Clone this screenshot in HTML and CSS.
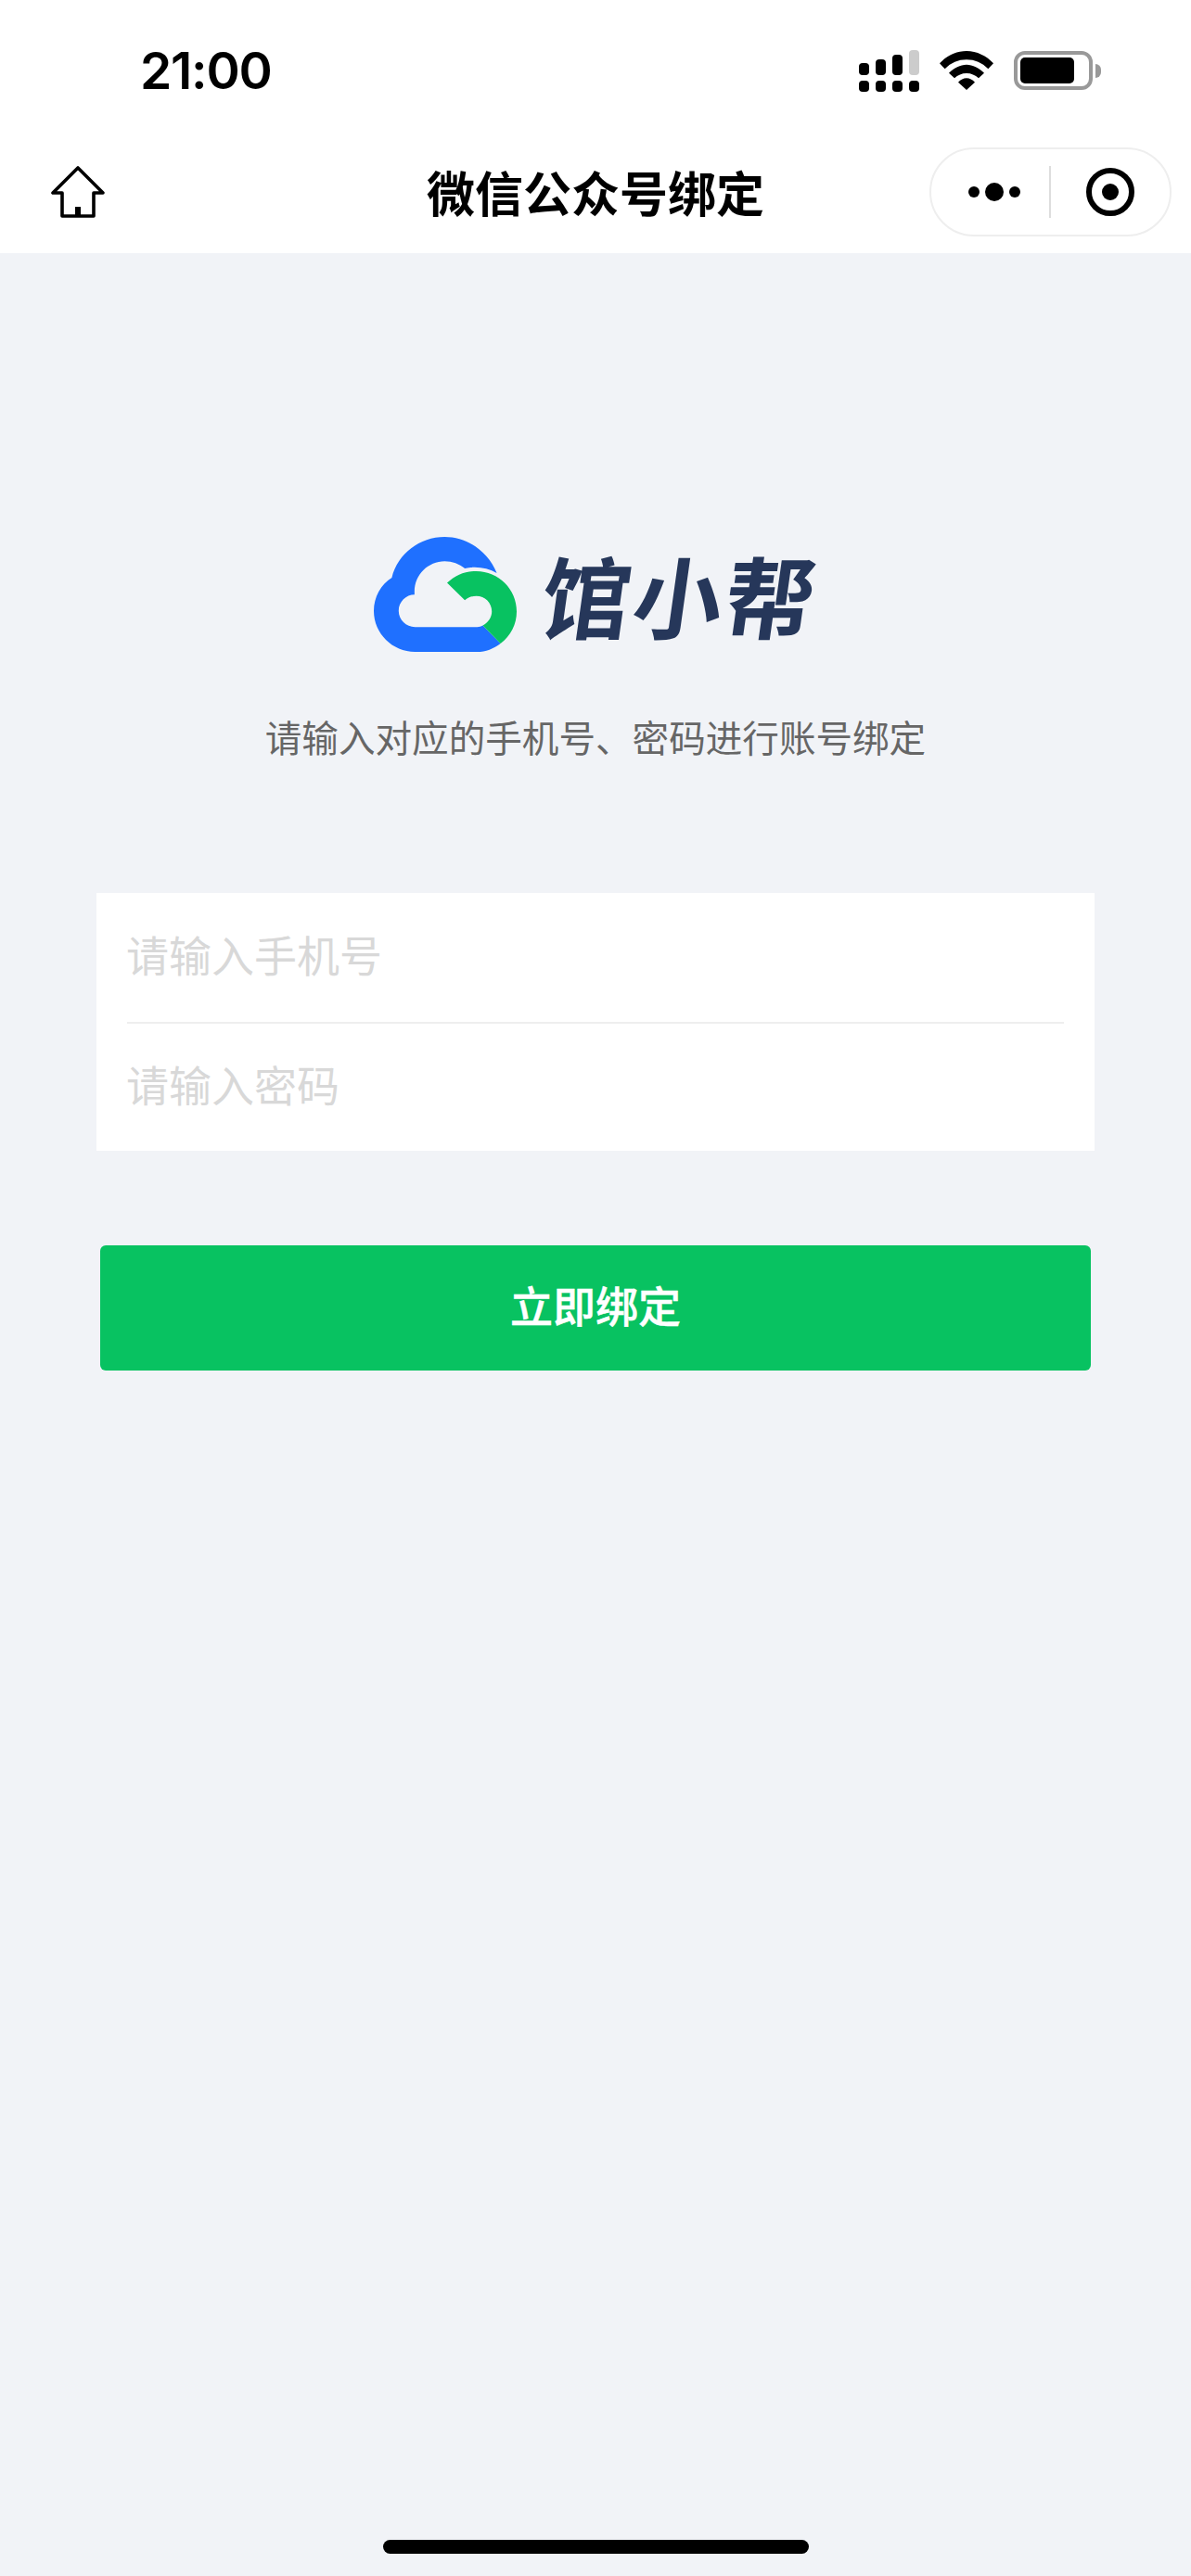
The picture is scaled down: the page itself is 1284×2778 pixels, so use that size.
FILE: index.html
```html
<!DOCTYPE html>
<html lang="zh-CN">
<head>
    <meta charset="UTF-8">
    <meta name="viewport" content="width=device-width, initial-scale=1.0">
    <title>微信公众号绑定</title>
    <link rel="stylesheet" href="styles.css">
</head>
<body>
    <div class="page">
        <div class="status-bar">
            <span class="time">21:00</span>
            <div class="status-icons">
                <svg class="icon-signal" width="65" height="45" viewBox="0 0 65 45">
                    <rect x="0" y="14" width="11" height="13" rx="4"/>
                    <rect x="18" y="10" width="11" height="17" rx="4"/>
                    <rect x="36" y="5" width="11" height="22" rx="4"/>
                    <rect x="54" y="0" width="11" height="27" rx="4" fill="#ccc"/>
                    <rect x="0" y="33" width="11" height="12" rx="4"/>
                    <rect x="18" y="33" width="11" height="12" rx="4"/>
                    <rect x="36" y="33" width="11" height="12" rx="4"/>
                    <rect x="54" y="33" width="11" height="12" rx="4"/>
                </svg>
                <svg class="icon-wifi" width="58" height="42" viewBox="398 72 174 126">
                    <path d="M398 112C420 88 452 72 485 72C518 72 550 88 572 112L555 130C535 110 512 100 485 100C458 100 435 110 415 130Z"/>
                    <path d="M428 143C445 127 465 116 485 116C505 116 525 127 542 143L524 160C513 150 500 144 485 144C470 144 457 150 446 160Z"/>
                    <path d="M458 173C466 165 475 160 485 160C495 160 504 165 512 173L485 198Z"/>
                </svg>
                <div class="battery">
                    <div class="battery-body"><div class="battery-level"></div></div>
                    <div class="battery-cap"></div>
                </div>
            </div>
        </div>

        <div class="nav-bar">
            <div class="nav-left">
                <svg class="icon-home" width="58" height="56" viewBox="0 0 58 56">
                    <path d="M29 2L2 29H12V54H46V29H56Z" fill="none" stroke="#000" stroke-width="3.6" stroke-linejoin="round"/>
                    <rect x="26" y="44" width="6" height="10"/>
                </svg>
            </div>
            <div class="nav-title">微信公众号绑定</div>
            <div class="nav-right">
                <div class="capsule">
                    <div class="capsule-more">
                        <span class="dot"></span><span class="dot dot-big"></span><span class="dot"></span>
                    </div>
                    <div class="capsule-line"></div>
                    <div class="capsule-close"><span class="close-ring"><span class="close-core"></span></span></div>
                </div>
            </div>
        </div>

        <div class="content">
            <div class="logo">
                <svg class="logo-cloud" width="154" height="124" viewBox="72 87 460 370">
                    <path fill="#1f70ff" d="M468 203C440 135 375 87 300 87C220 87 150 140 130 218C95 240 72 280 72 325C72 398 132 457 205 457H405C432 457 458 447 480 430L423 372C417 376 412 377 405 377H205C176 377 152 354 152 325C152 296 176 273 203 273V262C203 208 248 165 300 165C325 165 347 174 365 188C398 180 438 185 468 203Z"/>
                    <path fill="#08c261" d="M308 235C335 210 365 197 402 197C474 197 532 255 532 327C532 368 513 405 480 430L423 372C440 362 452 346 452 327C452 299 430 277 402 277C388 277 375 282 365 291Z"/>
                </svg>
                <span class="logo-text">馆小帮</span>
            </div>
            <p class="tip">请输入对应的手机号、密码进行账号绑定</p>

            <form class="bind-form">
                <div class="field"><input type="text" placeholder="请输入手机号"></div>
                <div class="field"><input type="password" placeholder="请输入密码"></div>
            </form>

            <button class="bind-btn" type="button">立即绑定</button>
        </div>

        <div class="home-indicator"></div>
    </div>
</body>
</html>
```

FILE: styles.css
```css
* {
    box-sizing: border-box;
}
body {
    margin: 0;
    background-color: #f1f3f7;
    font-family: "Noto Sans CJK SC", "Noto Sans", sans-serif;
    color: #000;
}
.page {
    height: 2778px;
    display: flex;
    flex-direction: column;
    overflow: hidden;
}

/* status bar */
.status-bar {
    height: 140px;
    padding: 12px 97px 0 151px;
    background-color: #fff;
    display: flex;
    justify-content: space-between;
    align-items: center;
}
.time {
    font-family: Inter, sans-serif;
    font-size: 55px;
    font-weight: 600;
    letter-spacing: -1.2px;
    line-height: 60px;
}
.status-icons {
    display: flex;
    align-items: center;
    gap: 22px;
}
.battery {
    display: flex;
    align-items: center;
    gap: 3px;
}
.battery-body {
    width: 85px;
    height: 42px;
    border: 4px solid #999;
    border-radius: 12px;
    padding: 3px;
}
.battery-level {
    width: 58px;
    height: 100%;
    background-color: #000;
    border-radius: 5px;
}
.battery-cap {
    width: 6px;
    height: 15px;
    background-color: #999;
    border-radius: 0 8px 8px 0;
}

/* nav bar */
.nav-bar {
    height: 133px;
    padding: 0 21px;
    background-color: #fff;
    display: grid;
    grid-template-columns: 1fr auto 1fr;
    align-items: center;
}
.nav-left {
    padding-left: 34px;
    display: flex;
}
.nav-title {
    font-size: 52px;
    font-weight: 700;
    line-height: 60px;
}
.nav-right {
    display: flex;
    justify-content: flex-end;
}
.capsule {
    width: 261px;
    height: 96px;
    border: 2px solid #eee;
    border-radius: 48px;
    display: flex;
    align-items: center;
}
.capsule-more {
    width: 127px;
    padding-left: 8px;
    display: flex;
    justify-content: center;
    align-items: center;
    gap: 6px;
}
.dot {
    width: 12px;
    height: 12px;
    border-radius: 50%;
    background-color: #000;
}
.dot-big {
    width: 20px;
    height: 20px;
}
.capsule-line {
    width: 2px;
    height: 56px;
    background-color: #ddd;
}
.capsule-close {
    flex: 1;
    display: flex;
    justify-content: center;
}
.close-ring {
    width: 52px;
    height: 52px;
    border: 6px solid #000;
    border-radius: 50%;
    display: flex;
    justify-content: center;
    align-items: center;
}
.close-core {
    width: 18px;
    height: 18px;
    border-radius: 50%;
    background-color: #000;
}

/* content */
.content {
    flex: 1;
    display: flex;
    flex-direction: column;
    align-items: center;
    padding-top: 306px;
}
.logo {
    display: flex;
    align-items: center;
    gap: 28px;
}
.logo-text {
    display: inline-block;
    font-size: 96px;
    font-weight: 700;
    line-height: 124px;
    letter-spacing: 3px;
    color: #26375a;
    transform: skewX(-8deg);
}
.tip {
    margin: 62px 0 0;
    font-size: 39.6px;
    line-height: 58px;
    color: #666;
}
.bind-form {
    width: 1076px;
    margin-top: 140px;
    padding: 0 33px;
    background-color: #fff;
}
.field {
    height: 139px;
    display: flex;
    align-items: center;
}
.field + .field {
    border-top: 2px solid #eee;
}
.field input {
    width: 100%;
    border: 0;
    outline: 0;
    padding: 0 0 10px;
    margin-left: -1px;
    font-family: inherit;
    font-size: 46px;
    background: transparent;
}
.field input::placeholder {
    color: #d8d8d8;
    opacity: 1;
}
.bind-btn {
    width: 1068px;
    height: 135px;
    margin-top: 102px;
    padding: 0 0 10px;
    border: 0;
    border-radius: 6px;
    background-color: #08c261;
    color: #fff;
    font-family: inherit;
    font-size: 46px;
    font-weight: 500;
    -webkit-text-stroke: 0.5px #fff;
}

.home-indicator {
    width: 459px;
    height: 15px;
    margin: 0 auto 24px;
    border-radius: 8px;
    background-color: #000;
    flex-shrink: 0;
}
```
